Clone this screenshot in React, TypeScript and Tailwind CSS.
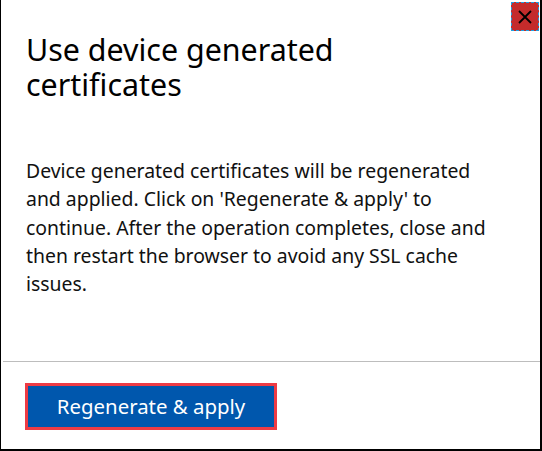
import React from "react";

export default function App() {
  return (
    <div
      className="relative w-[542px] h-[451px] bg-white border-l border-r-2 border-b-2 border-black flex flex-col overflow-hidden"
      style={{ fontFamily: '"Noto Sans", "Open Sans", sans-serif' }}
    >
      <button className="absolute right-[1px] top-[2px] w-[28px] h-[29px] bg-[#c42b2b] outline outline-1 outline-dashed outline-[#1e9fe0] -outline-offset-1 flex items-center justify-center">
        <svg width="16" height="16" viewBox="0 0 16 16">
          <path d="M2 2 L14 14 M14 2 L2 14" stroke="#000" strokeWidth="1.8" />
        </svg>
      </button>
      <div className="flex-1 pl-[25px] pr-[30px]">
        <h1 className="mt-[32px] text-[30.4px] leading-[35px] text-black font-normal w-[380px]">
          Use device generated certificates
        </h1>
        <p className="mt-[55px] text-[19.4px] leading-[28.25px] text-[#111] w-[490px] whitespace-nowrap">
          Device generated certificates will be regenerated
          <br />
          and applied. Click on 'Regenerate &amp; apply' to
          <br />
          continue. After the operation completes, close and
          <br />
          then restart the browser to avoid any SSL cache
          <br />
          issues.
        </p>
      </div>
      <div className="h-px bg-[#bdbdbd] ml-[2px] mb-[21px]" />
      <div className="pl-[24px] pb-[19px]">
        <button className="w-[252px] h-[47px] bg-[#0057ad] border-[3px] border-[#ee3b44] text-white text-[20.4px] flex items-center justify-center">
          Regenerate &amp; apply
        </button>
      </div>
    </div>
  );
}
